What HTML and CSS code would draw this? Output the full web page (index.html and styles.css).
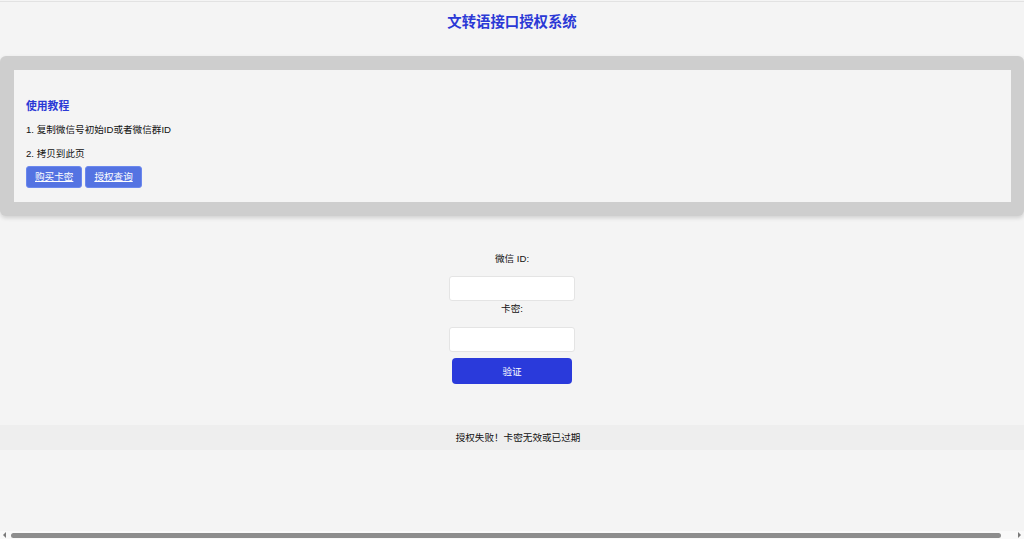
FILE: index.html
```html
<!DOCTYPE html>
<html lang="zh-CN">

<head>
  <meta charset="UTF-8" />
  <meta name="viewport" content="width=device-width, initial-scale=1" />
  <title>文转语接口授权系统</title>
  <link rel="stylesheet" href="styles.css">
</head>

<body>

  <!-- Header -->
  <div class="header">
    <h1>文转语接口授权系统</h1>
  </div>

  <!-- Tutorial card -->
  <div class="card">
    <div class="card-inner">
      <h3>使用教程</h3>
      <p>1. 复制微信号初始ID或者微信群ID</p>
      <p>2. 拷贝到此页</p>
      <div class="links">
        <a href="#" class="link-btn">购买卡密</a>
        <a href="#" class="link-btn">授权查询</a>
      </div>
    </div>
  </div>

  <!-- Verify form -->
  <form class="verify" onsubmit="return false">
    <label for="wxid">微信 ID:</label>
    <input type="text" id="wxid" />
    <label for="kami">卡密:</label>
    <input type="text" id="kami" />
    <button type="submit" class="verify-btn">验证</button>
  </form>

  <div class="status">授权失败！卡密无效或已过期</div>

  <!-- Horizontal scrollbar -->
  <div class="hscroll">
    <span class="arrow left"></span>
    <span class="thumb"></span>
    <span class="arrow right"></span>
  </div>

</body>

</html>
```

FILE: styles.css
```css
* {
  box-sizing: border-box;
}

html {
  background: #f4f4f4;
}

body {
  margin: 0;
  padding-top: 1px;
  color: #111;
  font-family: 'Liberation Sans', 'Noto Sans CJK SC', sans-serif;
  font-size: 9.6px;
}

/* Header */
.header {
  border-top: 1px solid #e2e2e2;
  padding: 10px 0 24px;
  text-align: center;
}

.header h1 {
  margin: 0;
  font-size: 14.4px;
  line-height: 20px;
  color: #2b39d6;
}

/* Tutorial card */
.card {
  background: #cecece;
  padding: 14px 13px 14px 14px;
  border-radius: 6px;
  box-shadow: 0 2px 4px rgba(0, 0, 0, 0.15);
}

.card-inner {
  background: #f4f4f4;
  padding: 29px 12px 14px;
}

.card-inner h3 {
  margin: 0 0 10px;
  font-size: 10.8px;
  line-height: 14px;
  color: #2b39d6;
}

.card-inner p {
  margin: 0 0 10px;
  line-height: 14px;
}

.card-inner p:last-of-type {
  margin-bottom: 5px;
}

.links {
  display: flex;
  gap: 3px;
}

.link-btn {
  display: inline-block;
  height: 22px;
  line-height: 20px;
  padding: 0 8px;
  background: #5473e2;
  border: 1px solid #6b88ee;
  border-radius: 3px;
  color: #fff;
  font-size: 9.6px;
}

/* Verify form */
.verify {
  display: flex;
  flex-direction: column;
  align-items: center;
  padding-top: 36px;
}

.verify label {
  line-height: 14px;
  margin-bottom: 10px;
}

.verify input {
  width: 126px;
  height: 25px;
  margin: 0 0 1px;
  background: #fff;
  border: 1px solid #e4e4e4;
  border-radius: 3px;
  outline: none;
}

.verify input + label {
  margin-bottom: 11px;
}

.verify-btn {
  width: 120px;
  height: 26px;
  margin-top: 5px;
  border: none;
  border-radius: 4px;
  background: #2a3adb;
  color: #fff;
  font-family: inherit;
  font-size: 9.6px;
  cursor: pointer;
}

/* Status line */
.status {
  margin-top: 41px;
  height: 25px;
  line-height: 25px;
  background: #eeeeee;
  text-align: center;
  padding-left: 12px;
}

/* Scrollbar strip along the bottom */
.hscroll {
  position: fixed;
  left: 0;
  right: 0;
  bottom: 0;
  height: 8px;
  display: flex;
  align-items: center;
  padding: 0 3px;
  background: #f9f9f9;
}

.thumb {
  flex: 1;
  height: 5px;
  margin: 1px 17px 0 5px;
  border-radius: 3px;
  background: #8d8d8d;
}

.arrow {
  width: 0;
  height: 0;
  border-top: 3px solid transparent;
  border-bottom: 3px solid transparent;
}

.arrow.left {
  border-right: 3px solid #7a7a7a;
}

.arrow.right {
  border-left: 3px solid #7a7a7a;
}
```
